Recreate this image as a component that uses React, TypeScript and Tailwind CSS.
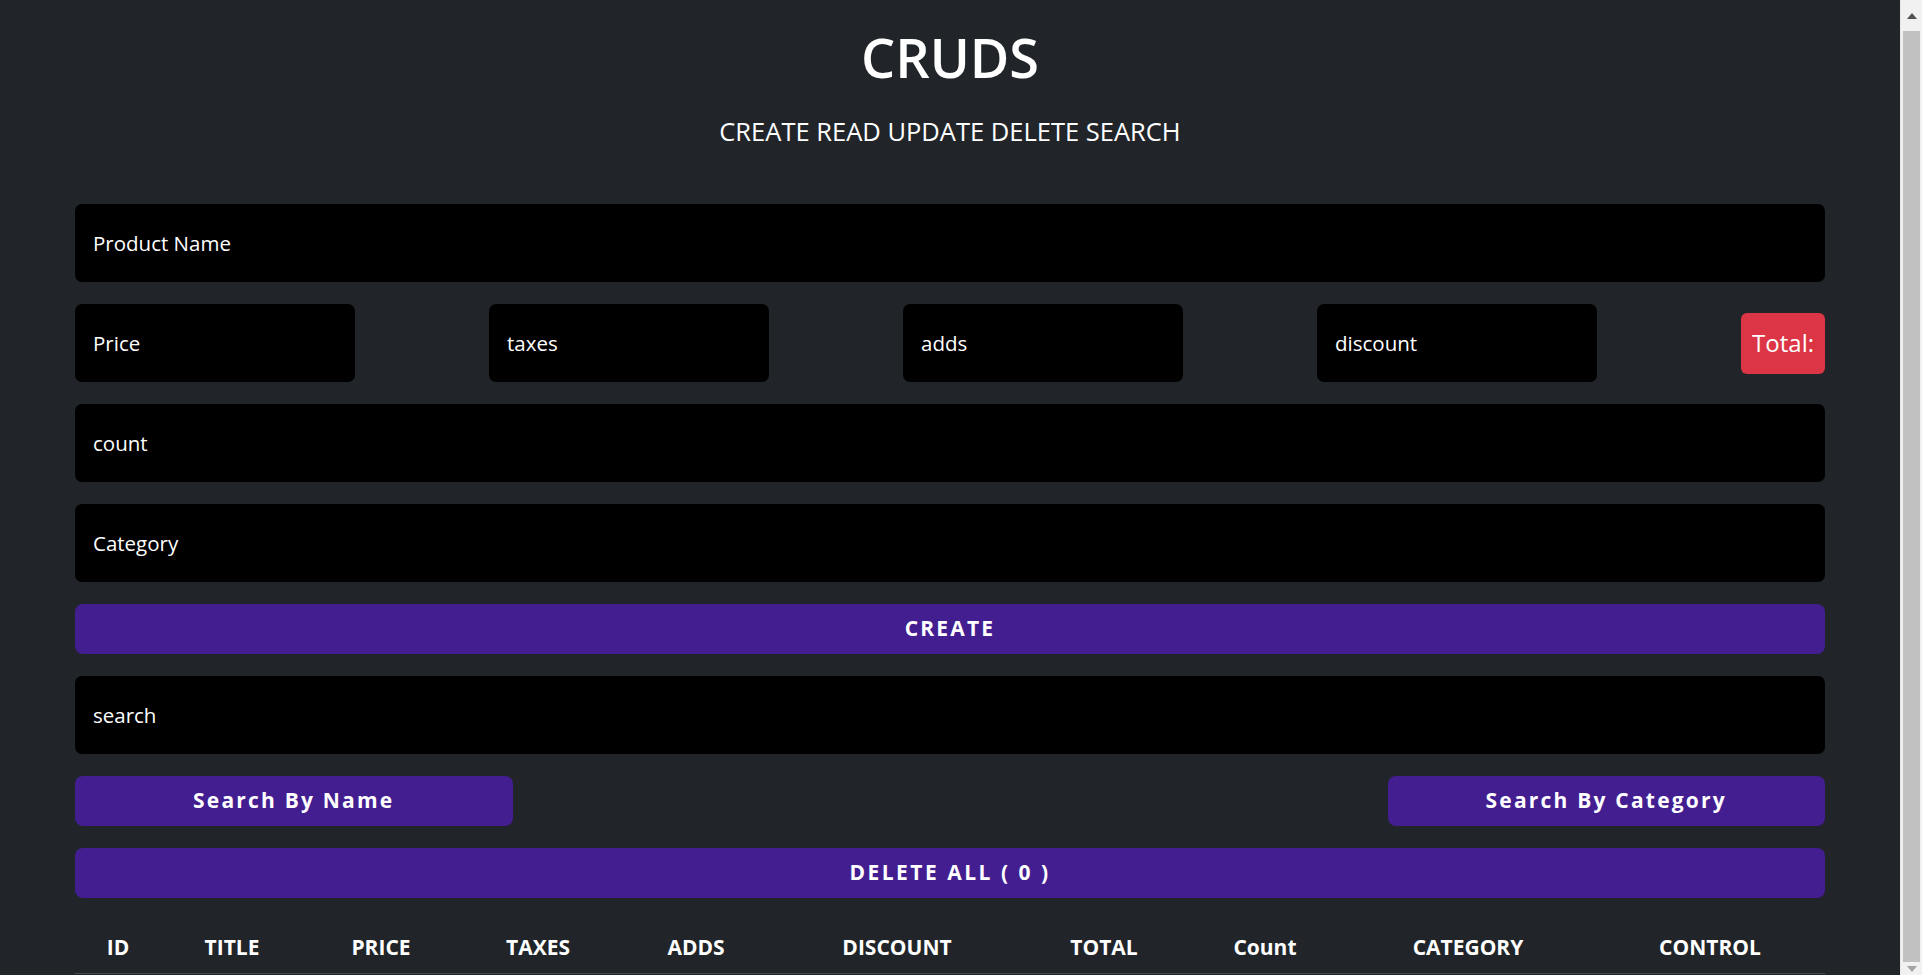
import { useState } from 'react'

type Product = {
    title: string;
    price: string;
    taxes: string;
    adds: string;
    discount: string;
    count: string;
    category: string;
};

const empty: Product = { title: '', price: '', taxes: '', adds: '', discount: '', count: '', category: '' };

const inputClass = "h-[78px] bg-black text-white placeholder:text-white rounded-[7px] px-[18px] text-[20.5px] outline-none";
const buttonClass = "h-[50px] bg-[#431e91] text-white rounded-[8px] text-[21px] font-bold tracking-[2.2px] hover:bg-[#51259f] transition-colors";

function App() {
    const [form, setForm] = useState<Product>(empty);
    const [products, setProducts] = useState<Product[]>([]);
    const [search, setSearch] = useState('');

    const update = (key: keyof Product) => (e: React.ChangeEvent<HTMLInputElement>) => {
        setForm({ ...form, [key]: e.target.value });
    };

    // total only shows once a price is typed
    const total = form.price
        ? (+form.price + +form.taxes + +form.adds) - +form.discount
        : '';

    const handleCreate = () => {
        if (!form.title) return;
        setProducts([...products, form]);
        setForm(empty);
    };

    return (
        <div className="flex h-[975px] overflow-hidden bg-[#212529] text-white font-['Open_Sans',sans-serif]">
            <div className="w-[1900px] shrink-0">
                <div className="w-[1750px] mx-auto">
                    <div className="text-center">
                        <h1 className="pt-[25px] text-[54px] leading-[64px] font-semibold">CRUDS</h1>
                        <p className="mt-[24px] text-[25.5px] leading-[36px]">CREATE READ UPDATE DELETE SEARCH</p>
                    </div>

                    <div className="mt-[55px] flex flex-col gap-[22px]">
                        <input className={inputClass} placeholder="Product Name" value={form.title} onChange={update('title')} />

                        <div className="flex items-center gap-[134px]">
                            <input className={`${inputClass} w-[280px]`} placeholder="Price" value={form.price} onChange={update('price')} />
                            <input className={`${inputClass} w-[280px]`} placeholder="taxes" value={form.taxes} onChange={update('taxes')} />
                            <input className={`${inputClass} w-[280px]`} placeholder="adds" value={form.adds} onChange={update('adds')} />
                            <input className={`${inputClass} w-[280px]`} placeholder="discount" value={form.discount} onChange={update('discount')} />
                            <small className="ml-auto h-[61px] flex items-center px-[11px] bg-[#dc3545] rounded-[6px] text-[24px]">
                                Total:{total}
                            </small>
                        </div>

                        <input className={inputClass} placeholder="count" value={form.count} onChange={update('count')} />
                        <input className={inputClass} placeholder="Category" value={form.category} onChange={update('category')} />

                        <button onClick={handleCreate} className={buttonClass}>CREATE</button>

                        <input className={inputClass} placeholder="search" value={search} onChange={(e) => setSearch(e.target.value)} />

                        <div className="flex justify-between">
                            <button className={`${buttonClass} w-1/4`}>Search By Name</button>
                            <button className={`${buttonClass} w-1/4`}>Search By Category</button>
                        </div>

                        <button onClick={() => setProducts([])} className={`${buttonClass} tracking-[2.5px]`}>
                            DELETE ALL ( {products.length} )
                        </button>
                    </div>

                    <table className="mt-[22px] w-full table-fixed">
                        <thead>
                            <tr className="border-b border-[#43484e] text-[21px] font-bold leading-[30px]">
                                <th className="w-[86px] pt-[12px] pb-[11px]">ID</th>
                                <th className="w-[142px] pt-[12px] pb-[11px]">TITLE</th>
                                <th className="w-[156px] pt-[12px] pb-[11px]">PRICE</th>
                                <th className="w-[158px] pt-[12px] pb-[11px]">TAXES</th>
                                <th className="w-[158px] pt-[12px] pb-[11px]">ADDS</th>
                                <th className="w-[244px] pt-[12px] pb-[11px]">DISCOUNT</th>
                                <th className="w-[170px] pt-[12px] pb-[11px]">TOTAL</th>
                                <th className="w-[152px] pt-[12px] pb-[11px]">Count</th>
                                <th className="w-[254px] pt-[12px] pb-[11px]">CATEGORY</th>
                                <th className="w-[230px] pt-[12px] pb-[11px]">CONTROL</th>
                            </tr>
                        </thead>
                        <tbody>
                            {products
                                .filter(p => p.title.toLowerCase().includes(search.toLowerCase()))
                                .map((p, i) => (
                                    <tr key={i} className="text-center text-[18px]">
                                        <td className="py-2">{i + 1}</td>
                                        <td>{p.title}</td>
                                        <td>{p.price}</td>
                                        <td>{p.taxes}</td>
                                        <td>{p.adds}</td>
                                        <td>{p.discount}</td>
                                        <td>{+p.price + +p.taxes + +p.adds - +p.discount}</td>
                                        <td>{p.count}</td>
                                        <td>{p.category}</td>
                                        <td>delete</td>
                                    </tr>
                                ))}
                        </tbody>
                    </table>
                </div>
            </div>

            {/* window scrollbar */}
            <div className="w-[22px] shrink-0 flex flex-col bg-[#f1f1f1] border-l border-[#e8e8e8]">
                <div className="h-[31px] flex items-center justify-center">
                    <svg width="10" height="6" viewBox="0 0 10 6"><path d="M0 6 L5 0 L10 6 Z" fill="#505050" /></svg>
                </div>
                <div className="flex-1 mx-[2px] bg-[#c1c1c1]" />
                <div className="h-[13px] flex items-center justify-center">
                    <svg width="10" height="6" viewBox="0 0 10 6"><path d="M0 0 L5 6 L10 0 Z" fill="#a3a3a3" /></svg>
                </div>
            </div>
        </div>
    )
}

export default App
